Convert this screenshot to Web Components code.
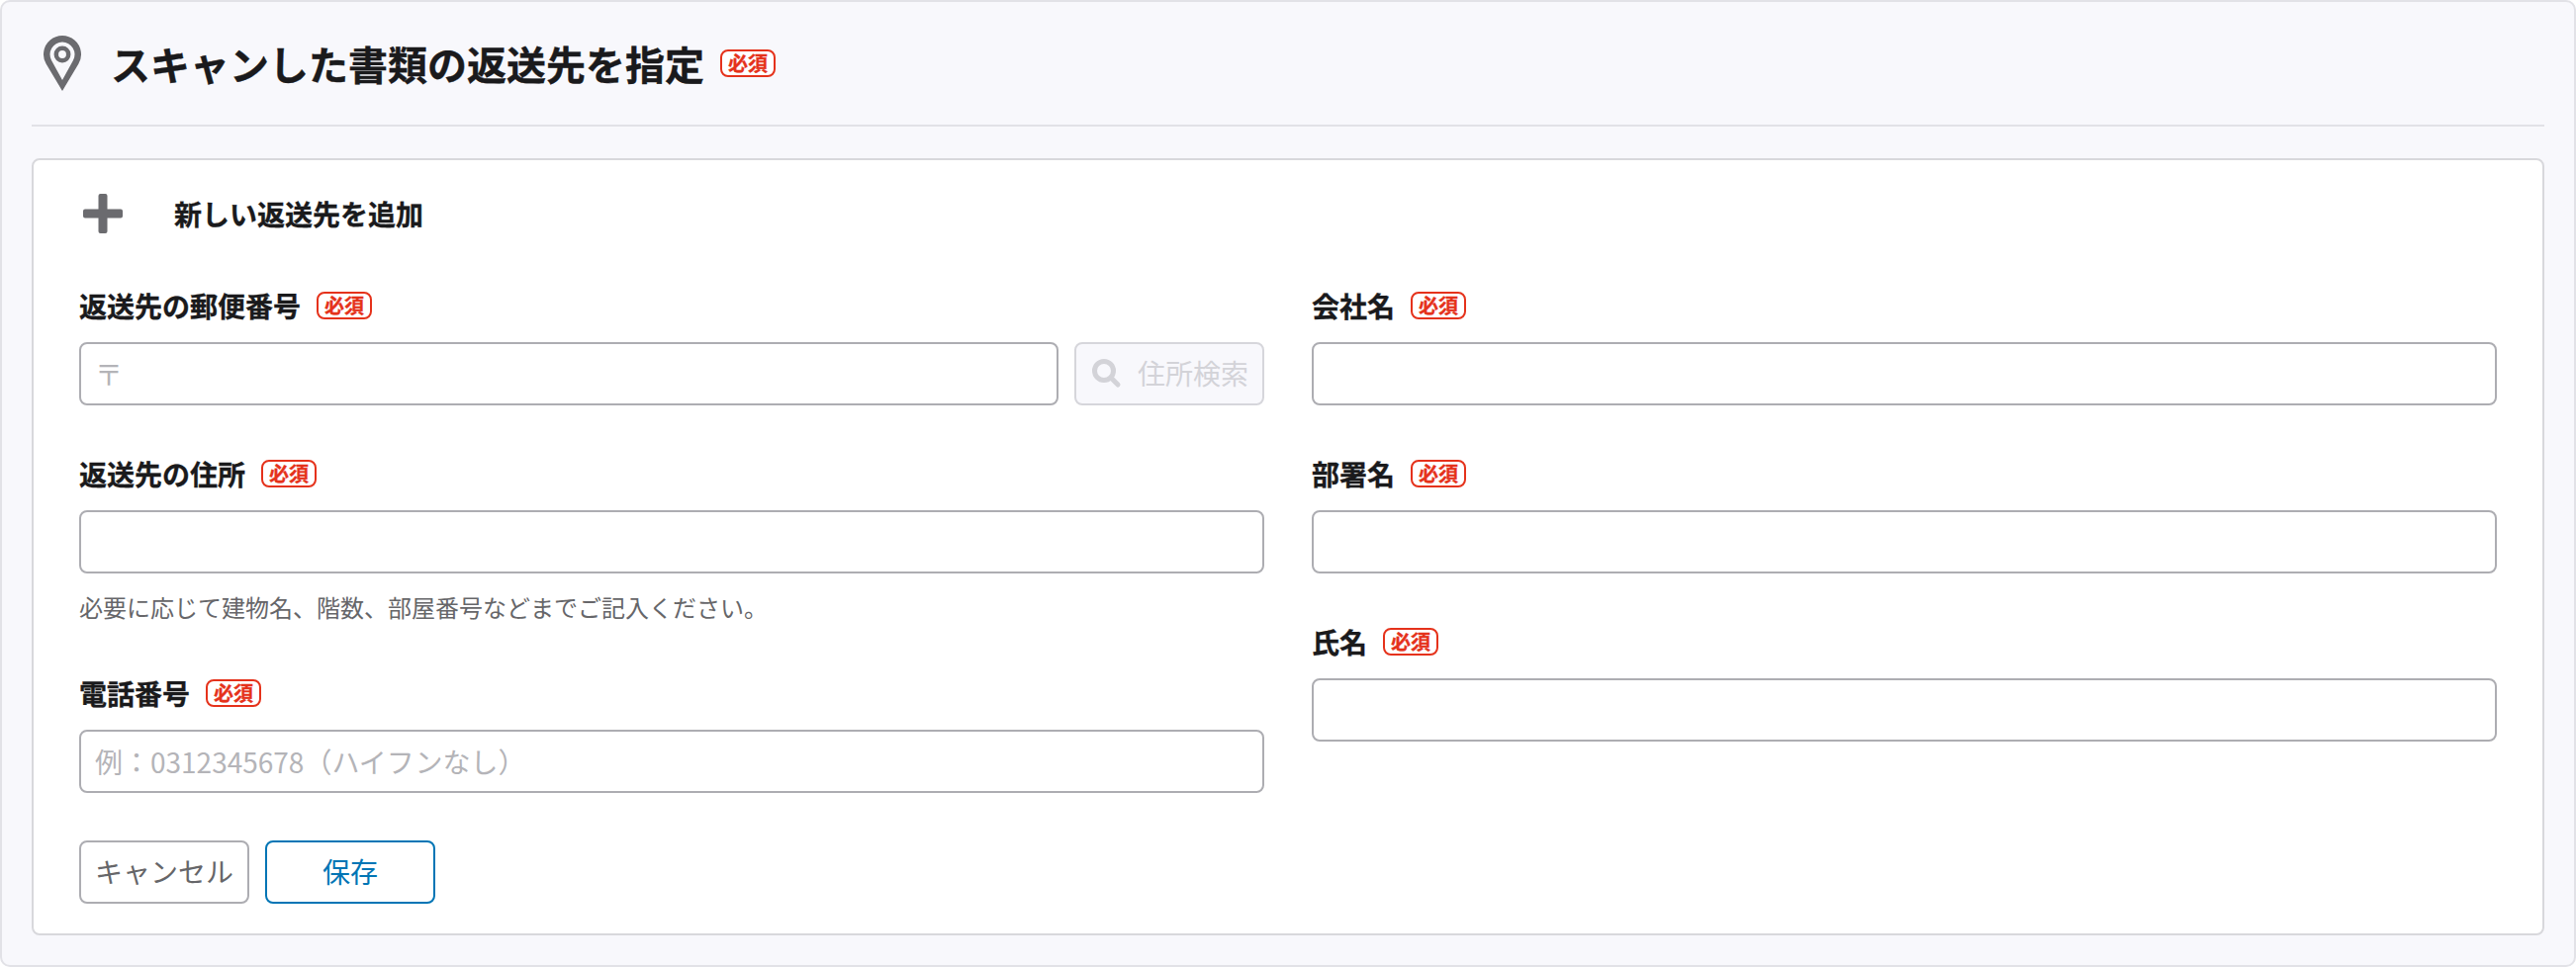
<!DOCTYPE html>
<html lang="ja">
<head>
<meta charset="utf-8">
<title>スキャンした書類の返送先を指定</title>
<style>
    html, body { margin: 0; padding: 0; background: #fff; }
    body { font-family: "Noto Sans CJK JP", "Noto Sans", sans-serif; color: #1a1a1c; }
</style>
</head>
<body>
<return-panel heading="スキャンした書類の返送先を指定">
    <address-form></address-form>
</return-panel>

<script>
    class RequiredBadge extends HTMLElement {
        constructor() {
            super();
            this.attachShadow({ mode: 'open' });
            this.shadowRoot.innerHTML = `
                <style>
                    :host {
                        display: inline-flex;
                        align-items: center;
                        justify-content: center;
                        box-sizing: border-box;
                        width: 56px;
                        height: 28px;
                        border: 2px solid #e5321b;
                        border-radius: 8px;
                        background: #fff;
                        color: #e5321b;
                        font-size: 20px;
                        font-weight: 700;
                        line-height: 1;
                        -webkit-text-stroke: 0.3px #e5321b;
                    }
                </style>
                必須
            `;
        }
    }

    class ReturnPanel extends HTMLElement {
        constructor() {
            super();
            this.attachShadow({ mode: 'open' });
            const heading = this.getAttribute('heading') || '';
            this.shadowRoot.innerHTML = `
                <style>
                    :host {
                        display: block;
                        box-sizing: border-box;
                        width: 2604px;
                        height: 978px;
                        padding: 0 30px 30px;
                        background: #f8f8fc;
                        border: 2px solid #e2e2e7;
                        border-radius: 10px;
                    }
                    header {
                        display: flex;
                        align-items: center;
                        gap: 16px;
                        height: 124px;
                        border-bottom: 2px solid #e2e2e7;
                        margin-bottom: 32px;
                    }
                    svg { display: block; flex: none; }
                    h1 {
                        margin: 0;
                        font-size: 40px;
                        line-height: 60px;
                        font-weight: 700;
                        color: #1a1a1c;
                        -webkit-text-stroke: 0.4px #1a1a1c;
                    }
                </style>
                <header>
                    <svg width="64" height="64" viewBox="0 0 64 64">
                        <path fill="#6b6b6f" fill-rule="evenodd" d="M31 60L14.700 32.800A19 19 0 1 1 47.300 32.800ZM31 49L20 29A12.500 12.500 0 1 1 42 29Z"/>
                        <circle cx="31" cy="23" r="6.200" fill="none" stroke="#6b6b6f" stroke-width="4.500"/>
                    </svg>
                    <h1>${heading}</h1>
                    <required-badge></required-badge>
                </header>
                <slot></slot>
            `;
        }
    }

    class FormField extends HTMLElement {
        constructor() {
            super();
            this.attachShadow({ mode: 'open' });
            const label = this.getAttribute('label') || '';
            const hint = this.getAttribute('hint');
            this.shadowRoot.innerHTML = `
                <style>
                    :host { display: block; }
                    .label {
                        display: flex;
                        align-items: center;
                        gap: 16px;
                        height: 28px;
                        margin-bottom: 23px;
                        font-size: 28px;
                        font-weight: 700;
                        line-height: 28px;
                        color: #1a1a1c;
                        -webkit-text-stroke: 0.3px #1a1a1c;
                    }
                    .hint {
                        margin-top: 16px;
                        font-size: 24px;
                        line-height: 36px;
                        color: #666669;
                    }
                </style>
                <div class="label"><span>${label}</span><required-badge></required-badge></div>
                <slot></slot>
                ${hint ? `<div class="hint">${hint}</div>` : ''}
            `;
        }
    }

    class TextBox extends HTMLElement {
        constructor() {
            super();
            this.attachShadow({ mode: 'open' });
            const placeholder = this.getAttribute('placeholder') || '';
            this.shadowRoot.innerHTML = `
                <style>
                    :host { display: block; flex: 1; min-width: 0; }
                    input {
                        display: block;
                        box-sizing: border-box;
                        width: 100%;
                        height: 64px;
                        padding: 0 14px;
                        border: 2px solid #adadb2;
                        border-radius: 8px;
                        background: #fff;
                        font: inherit;
                        font-size: 28px;
                        color: #1a1a1c;
                        outline: none;
                    }
                    input::placeholder { color: #b4b4b8; opacity: 1; }
                </style>
                <input type="text" placeholder="${placeholder}">
            `;
        }
    }

    class ActionButton extends HTMLElement {
        constructor() {
            super();
            this.attachShadow({ mode: 'open' });
            this.shadowRoot.innerHTML = `
                <style>
                    :host { display: block; flex: none; }
                    button {
                        display: flex;
                        align-items: center;
                        justify-content: center;
                        gap: 16px;
                        box-sizing: border-box;
                        width: var(--btn-width, 172px);
                        height: 64px;
                        padding: 0 14px 2px;
                        border: 2px solid #adadb2;
                        border-radius: 8px;
                        background: #fff;
                        font: inherit;
                        font-size: 28px;
                        color: #666669;
                    }
                    :host([variant="primary"]) button {
                        border-color: #0075b5;
                        color: #0075b5;
                    }
                    button:disabled {
                        border-color: #d6d6db;
                        background: #f8f8fc;
                        color: #d3d3d8;
                    }
                    ::slotted(svg) { display: block; flex: none; }
                </style>
                <button type="button"><slot></slot></button>
            `;
            if (this.hasAttribute('disabled')) {
                this.shadowRoot.querySelector('button').disabled = true;
            }
        }
    }

    class AddressForm extends HTMLElement {
        constructor() {
            super();
            this.attachShadow({ mode: 'open' });
            this.shadowRoot.innerHTML = `
                <style>
                    :host {
                        display: block;
                        box-sizing: border-box;
                        height: 786px;
                        padding: 30px 46px;
                        background: #fff;
                        border: 2px solid #d8d8dc;
                        border-radius: 8px;
                    }
                    .add {
                        display: flex;
                        align-items: center;
                        gap: 48px;
                        height: 48px;
                        margin-bottom: 55px;
                        font-size: 28px;
                        font-weight: 700;
                        color: #1a1a1c;
                        -webkit-text-stroke: 0.3px #1a1a1c;
                    }
                    .add svg { display: block; flex: none; }
                    .columns {
                        display: grid;
                        grid-template-columns: 1fr 1fr;
                        column-gap: 48px;
                    }
                    .column {
                        display: flex;
                        flex-direction: column;
                        gap: 55px;
                    }
                    .postal { display: flex; gap: 16px; }
                    .actions {
                        display: flex;
                        gap: 16px;
                        margin-top: 48px;
                    }
                </style>
                <div class="add">
                    <svg width="48" height="48" viewBox="0 0 48 48">
                        <path fill="#6b6b6f" d="M19.500 6a2 2 0 0 1 2-2h5a2 2 0 0 1 2 2v13.500H42a2 2 0 0 1 2 2v5a2 2 0 0 1-2 2H28.500V42a2 2 0 0 1-2 2h-5a2 2 0 0 1-2-2V28.500H6a2 2 0 0 1-2-2v-5a2 2 0 0 1 2-2h13.500Z"/>
                    </svg>
                    <span>新しい返送先を追加</span>
                </div>
                <div class="columns">
                    <div class="column">
                        <form-field label="返送先の郵便番号">
                            <div class="postal">
                                <text-box placeholder="〒"></text-box>
                                <action-button disabled style="--btn-width: 192px">
                                    <svg width="32" height="32" viewBox="0 0 32 32">
                                        <circle cx="14" cy="14" r="9.500" fill="none" stroke="#d3d3d8" stroke-width="5"/>
                                        <path d="M21 21l7 7" stroke="#d3d3d8" stroke-width="5" stroke-linecap="round"/>
                                    </svg>
                                    住所検索
                                </action-button>
                            </div>
                        </form-field>
                        <form-field label="返送先の住所" hint="必要に応じて建物名、階数、部屋番号などまでご記入ください。">
                            <text-box></text-box>
                        </form-field>
                        <form-field label="電話番号">
                            <text-box placeholder="例：0312345678（ハイフンなし）"></text-box>
                        </form-field>
                    </div>
                    <div class="column">
                        <form-field label="会社名"><text-box></text-box></form-field>
                        <form-field label="部署名"><text-box></text-box></form-field>
                        <form-field label="氏名"><text-box></text-box></form-field>
                    </div>
                </div>
                <div class="actions">
                    <action-button>キャンセル</action-button>
                    <action-button variant="primary">保存</action-button>
                </div>
            `;
        }
    }

    customElements.define('required-badge', RequiredBadge);
    customElements.define('return-panel', ReturnPanel);
    customElements.define('form-field', FormField);
    customElements.define('text-box', TextBox);
    customElements.define('action-button', ActionButton);
    customElements.define('address-form', AddressForm);
</script>
</body>
</html>
